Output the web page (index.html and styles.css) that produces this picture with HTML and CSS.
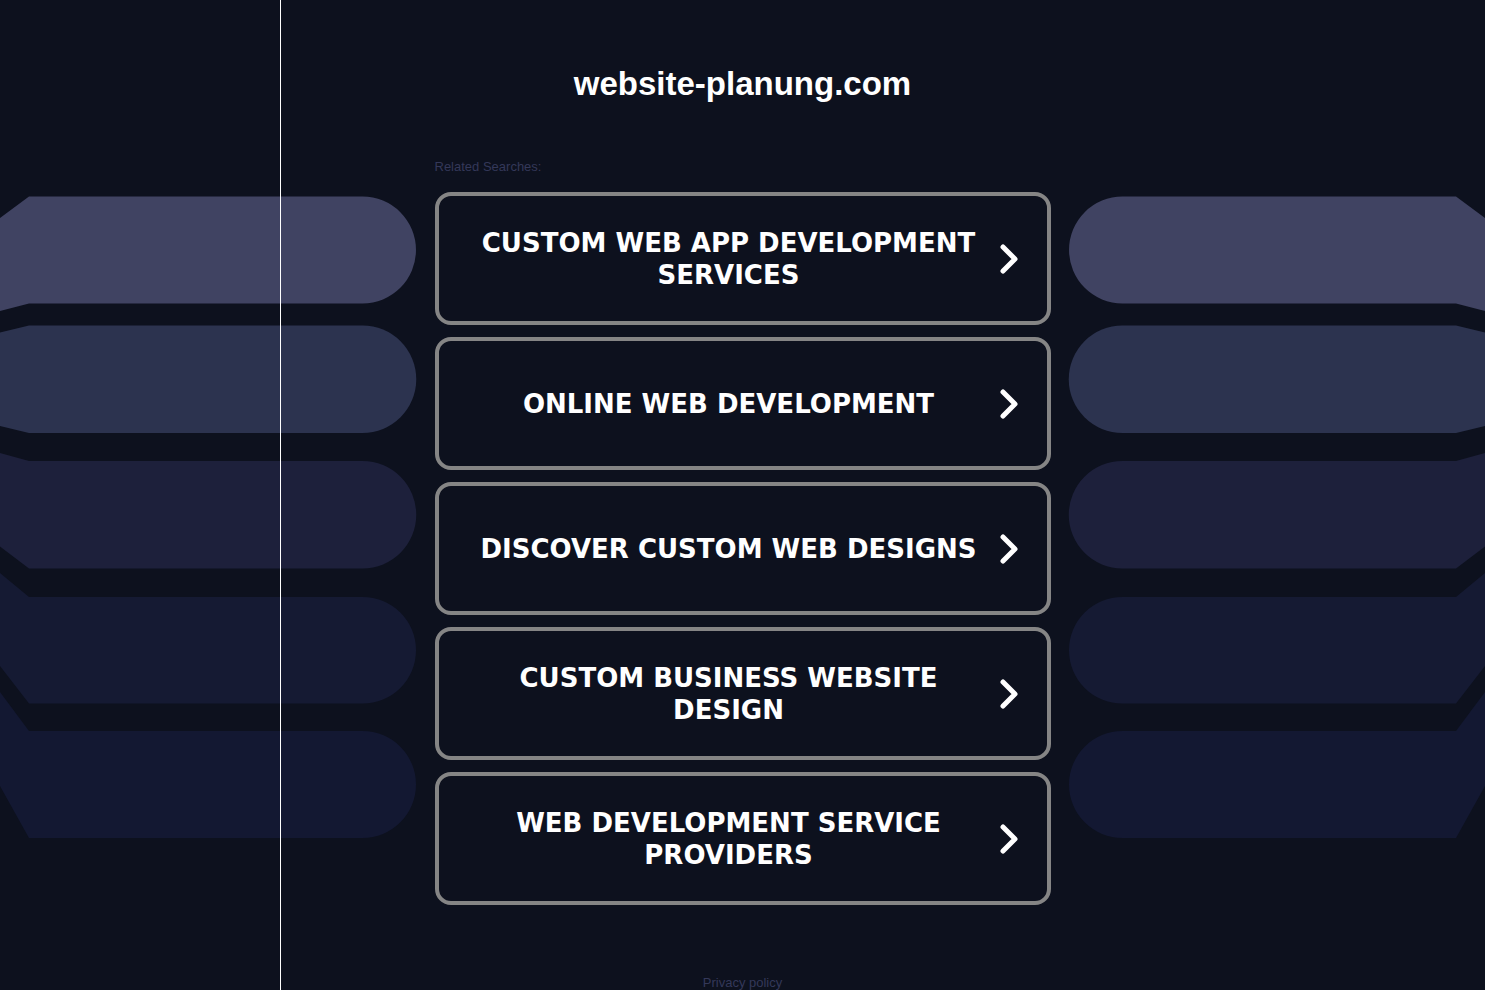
FILE: index.html
```html
<!DOCTYPE html>
<html lang="en">
<head>
    <meta charset="UTF-8">
    <meta name="viewport" content="width=device-width, initial-scale=1.0">
    <title>website-planung.com</title>
    <link rel="stylesheet" href="styles.css">
</head>
<body>
    <!-- Background bands -->
    <svg class="background" viewBox="0 0 1485 990" preserveAspectRatio="xMidYMin slice" aria-hidden="true">
        <defs>
            <g id="bands">
                <path fill="#404362" d="M0 218 L29 196.500H362.500a53.500 53.500 0 0 1 0 107H29L0 311Z"/>
                <path fill="#2c334f" d="M0 332.500 L29 325.500H362.500a53.500 53.500 0 0 1 0 107.500H29L0 426Z"/>
                <path fill="#1d203b" d="M0 453 L29 461H362.500a53.500 53.500 0 0 1 0 107.500H29L0 546.500Z"/>
                <path fill="#151a33" d="M0 573 L29 597H362.500a53.500 53.250 0 0 1 0 106.500H29L0 666Z"/>
                <path fill="#131832" d="M0 692 L29 731H362.500a53.500 53.500 0 0 1 0 107H29L0 786Z"/>
            </g>
        </defs>
        <use href="#bands"/>
        <use href="#bands" transform="translate(1485 0) scale(-1 1)"/>
    </svg>
    <div class="line"></div>

    <main class="container">
        <h1>website-planung.com</h1>
        <p class="label">Related Searches:</p>
        <nav class="searches">
            <a class="search" href="#">
                <span>Custom Web App Development Services</span>
                <svg class="arrow" viewBox="0 0 18 30"><path d="M3 3 L15 15 L3 27"/></svg>
            </a>
            <a class="search" href="#">
                <span>Online Web Development</span>
                <svg class="arrow" viewBox="0 0 18 30"><path d="M3 3 L15 15 L3 27"/></svg>
            </a>
            <a class="search" href="#">
                <span>Discover Custom Web Designs</span>
                <svg class="arrow" viewBox="0 0 18 30"><path d="M3 3 L15 15 L3 27"/></svg>
            </a>
            <a class="search" href="#">
                <span>Custom Business Website Design</span>
                <svg class="arrow" viewBox="0 0 18 30"><path d="M3 3 L15 15 L3 27"/></svg>
            </a>
            <a class="search" href="#">
                <span>Web Development Service Providers</span>
                <svg class="arrow" viewBox="0 0 18 30"><path d="M3 3 L15 15 L3 27"/></svg>
            </a>
        </nav>
    </main>

    <footer>
        <a href="#">Privacy policy</a>
    </footer>
</body>
</html>
```
FILE: styles.css
```css
* {
    box-sizing: border-box;
}

body {
    margin: 0;
    position: relative;
    background-color: #0d111e;
    color: #343859;
    font-family: Arial, "Liberation Sans", sans-serif;
    font-size: 13px;
    line-height: 14px;
}

.background {
    position: absolute;
    top: 0;
    left: 0;
    width: 100%;
    height: 100%;
    z-index: -1;
}

.line {
    position: absolute;
    top: 0;
    bottom: 0;
    left: 280px;
    width: 1px;
    background-color: white;
    z-index: -1;
}

.container {
    max-width: 616px;
    margin: 0 auto;
    padding-top: 65px;
}

h1 {
    margin: 0;
    color: white;
    font-size: 33px;
    line-height: 38px;
    text-align: center;
}

.label {
    margin: 57px 0 18px;
}

.searches {
    display: flex;
    flex-direction: column;
    gap: 12px;
}

.search {
    display: flex;
    align-items: center;
    min-height: 133px;
    padding: 0 29px 0 19px;
    border: 4px solid #858585;
    border-radius: 16px;
    color: white;
    font-family: Verdana, "DejaVu Sans", sans-serif;
    font-size: 26px;
    font-weight: bold;
    line-height: 32px;
    text-align: center;
    text-transform: uppercase;
    text-decoration: none;
}

.search span {
    flex: 1;
    padding: 0 12px;
}

.arrow {
    flex: none;
    width: 18px;
    height: 30px;
    fill: none;
    stroke: white;
    stroke-width: 5;
    stroke-linecap: round;
    stroke-linejoin: round;
}

footer {
    margin-top: 71px;
    text-align: center;
}

footer a {
    color: inherit;
    text-decoration: none;
}
```
